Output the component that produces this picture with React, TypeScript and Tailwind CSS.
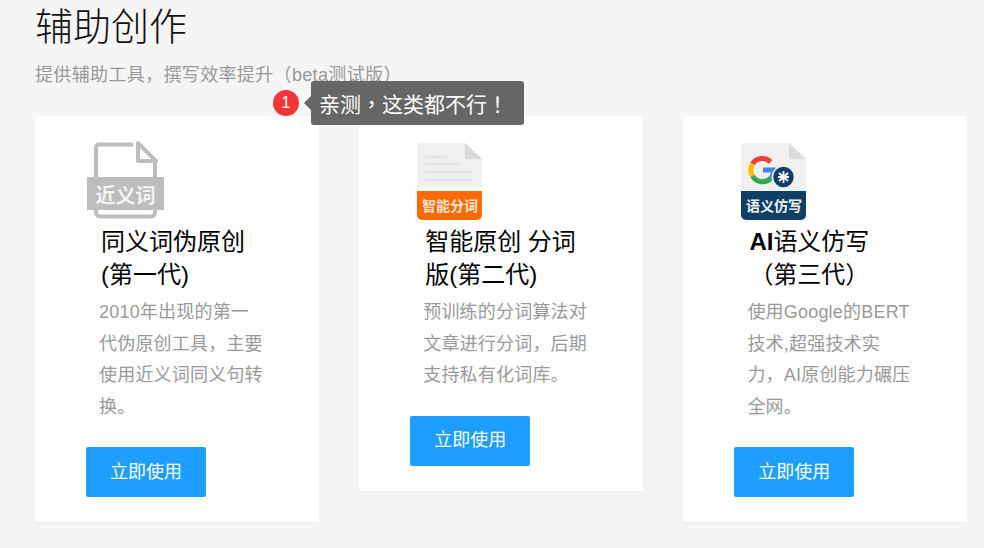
import React from 'react'

const font = { fontFamily: '"Liberation Sans", "Noto Sans CJK SC", sans-serif' }

function SynonymIcon() {
    return (
        <svg width="80" height="80" viewBox="0 0 80 80" className="block">
            <path d="M47 4.5H13a3 3 0 0 0-3 3v65a4 4 0 0 0 4 4h51a4 4 0 0 0 4-4V22" fill="none" stroke="#bdbdbd" strokeWidth="4" />
            <path d="M52 3v18h18z" fill="#fff" stroke="#bdbdbd" strokeWidth="4" strokeLinejoin="round" />
            <rect x="1" y="37" width="77" height="33" fill="#bdbdbd" />
            <text x="39.5" y="63" textAnchor="middle" fontSize="20" fontWeight="700" fill="#f2f2f2">近义词</text>
        </svg>
    )
}

function SegmentIcon() {
    return (
        <svg width="66" height="80" viewBox="0 0 66 80" className="block">
            <path d="M3 3h45l17 16v28H0V6a3 3 0 0 1 3-3z" fill="#f0f0f0" />
            <path d="M48 3l17 16H48z" fill="#d9d9d9" />
            <path d="M8 17h22M8 24h34M8 32h47M8 40h47" stroke="#dfe3e6" strokeWidth="2.5" />
            <path d="M0 51h65v24a5 5 0 0 1-5 5H5a5 5 0 0 1-5-5z" fill="#fc6a06" />
            <text x="33" y="71" textAnchor="middle" fontSize="14" fontWeight="700" fill="#fde6d4">智能分词</text>
        </svg>
    )
}

function GoogleIcon() {
    return (
        <svg width="66" height="80" viewBox="0 0 66 80" className="block">
            <path d="M3 3h45l17 16v32H0V6a3 3 0 0 1 3-3z" fill="#f0f0f0" />
            <path d="M48 3l17 16H48z" fill="#dcdcdc" />
            <path d="M29.6 21.9A11.5 11.5 0 0 0 11.5 24" fill="none" stroke="#ea4335" strokeWidth="5" />
            <path d="M11.5 24a11.5 11.5 0 0 0 0 12" fill="none" stroke="#fbbc05" strokeWidth="5" />
            <path d="M11.5 36a11.5 11.5 0 0 0 18.5 2" fill="none" stroke="#34a853" strokeWidth="5" />
            <path d="M30 38a11.5 11.5 0 0 0 3-8H22" fill="none" stroke="#4285f4" strokeWidth="5" />
            <circle cx="42.5" cy="37" r="11" fill="#0f3f66" stroke="#f0f0f0" strokeWidth="1.5" />
            <path d="M38 33l9 8M47 33l-9 8M42.5 31v12M37 37h11" stroke="#fff" strokeWidth="1.8" />
            <path d="M0 51h65v24a5 5 0 0 1-5 5H5a5 5 0 0 1-5-5z" fill="#0f3f66" />
            <text x="33" y="71" textAnchor="middle" fontSize="14" fontWeight="700" fill="#f2f5f7">语义仿写</text>
        </svg>
    )
}

function Card({ icon, title, desc }: { icon: React.ReactNode, title: React.ReactNode, desc: string }) {
    return (
        <div className="w-[284px] shrink-0 bg-white rounded-[2px] shadow-[0_1px_3px_rgba(0,0,0,0.04)] pt-[24px] pb-[25px] pl-[51px]">
            <div className="h-[80px] flex">{icon}</div>
            <h3 className="mt-[5px] pl-[15px] w-[180px] text-[24px] leading-[33px] font-normal text-[#000]">{title}</h3>
            <p className="mt-[6px] ml-[13px] w-[166px] text-[18px] leading-[31.5px] tracking-[0.2px] text-[#999]">{desc}</p>
            <button className="mt-[24px] block w-[120px] h-[50px] rounded-[2px] bg-[#1e9fff] text-white text-[18px]">立即使用</button>
        </div>
    )
}

export default function App() {
    return (
        <div style={font} className="relative w-[984px] h-[548px] overflow-hidden bg-[#f5f5f5] pl-[35px]">
            <h1 className="pt-[6px] text-[38px] leading-[42px] font-light text-[#111]">辅助创作</h1>
            <p className="mt-[16px] text-[18px] leading-[22px] tracking-[0.35px] text-[#999]">提供辅助工具，撰写效率提升（beta测试版）</p>
            <div className="mt-[30px] flex items-start gap-[40.2px]">
                <Card icon={<SynonymIcon />} title={<>同义词伪原创<br />(第一代)</>} desc="2010年出现的第一代伪原创工具，主要使用近义词同义句转换。" />
                <Card icon={<div className="ml-[7px]"><SegmentIcon /></div>} title={<>智能原创 分词版(第二代)</>} desc="预训练的分词算法对文章进行分词，后期支持私有化词库。" />
                <Card icon={<div className="ml-[7px]"><GoogleIcon /></div>} title={<><b>AI</b>语义仿写<br />（第三代）</>} desc="使用Google的BERT技术,超强技术实力，AI原创能力碾压全网。" />
            </div>
            <div className="absolute left-[273px] top-[90px] w-[26px] h-[26px] rounded-full bg-[#f5333a] text-white text-[16px] flex items-center justify-center">1</div>
            <div className="absolute left-[311px] top-[81px] w-[213px] h-[44px] rounded-[3px] bg-[#666] text-white text-[21px] leading-[45px] pl-[8px] whitespace-nowrap">
                <span className="absolute left-[-7px] top-[15px] w-0 h-0 border-y-[7px] border-y-transparent border-r-[7px] border-r-[#666]" />
                亲测<span className="font-['Noto_Sans_CJK_TC']">，</span>这类都不行<span className="font-['Noto_Sans_CJK_TC']">！</span>
            </div>
        </div>
    )
}
